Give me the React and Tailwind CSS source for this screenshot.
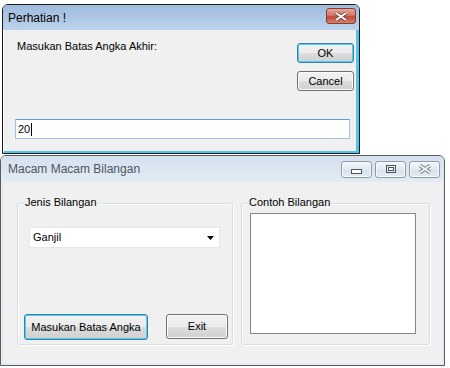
import React from 'react'

const ui = { fontFamily: '"Liberation Sans", Arial, sans-serif' }

function Button({ children, isDefault, className = '' }) {
  return (
    <div
      className={`flex items-center justify-center rounded-[3px] border text-[11px] text-black ${
        isDefault
          ? 'border-[#3c7fb1] shadow-[inset_0_0_0_1px_#48d0f5]'
          : 'border-[#707070] shadow-[inset_0_0_0_1px_#fcfcfc]'
      } bg-[linear-gradient(#f2f2f2_0%,#ebebeb_50%,#dddddd_51%,#cfcfcf_100%)] ${className}`}
    >
      {children}
    </div>
  )
}

function GroupBox({ label, className = '', children }) {
  return (
    <div
      className={`relative rounded-[3px] border border-[#d5dfe5] shadow-[inset_1px_1px_0_#ffffff,1px_1px_0_#ffffff] ${className}`}
    >
      <span className="absolute -top-[8px] left-[6px] bg-[#f0f0f0] px-[1px] text-[11px] leading-[13px] text-black">
        {label}
      </span>
      {children}
    </div>
  )
}

function CaptionButton({ children }) {
  return (
    <div className="flex h-[17px] w-[31px] items-center justify-center rounded-[3px] border border-[#8d9baa] bg-[linear-gradient(#f4f7fb,#e1e8f0_50%,#d7e0ea_51%,#e4ebf3)] shadow-[inset_0_0_0_1px_#f8fbff]">
      {children}
    </div>
  )
}

export default function App() {
  return (
    <div className="h-[368px] w-[450px] overflow-hidden bg-white" style={ui}>
      {/* Perhatian dialog */}
      <div className="ml-[2px] mt-[4px] flex h-[150px] w-[358px] flex-col overflow-hidden rounded-t-[6px] border border-[#1c1c1c]">
        <div className="flex h-[25px] items-center justify-between bg-[linear-gradient(#9fbbdc,#bcd3ec)] pl-[5px] pr-[3px]">
          <span className="text-[12px] text-black">Perhatian !</span>
          <div className="mb-[3px] flex h-[16px] w-[30px] items-center justify-center rounded-[3px] border border-[#8f3a2d] bg-[linear-gradient(#e2a89c,#d17565_45%,#c24a38_55%,#d3806e)]">
            <svg width="12" height="9" viewBox="0 0 12 9">
              <path d="M1 1 L11 8 M11 1 L1 8" stroke="#6b3a34" strokeWidth="3.4" />
              <path d="M1 1 L11 8 M11 1 L1 8" stroke="#ffffff" strokeWidth="2" />
            </svg>
          </div>
        </div>
        <div className="flex flex-1 flex-col border-b-[2px] border-l border-r-[3px] border-b-[#52c4ec] border-l-white border-r-[#52c4ec] bg-[#f0f0f0]">
          <div className="flex">
            <div className="flex-1 pl-[13px] pt-[10px] text-[11px] leading-[13px] text-black">
              Masukan Batas Angka Akhir:
            </div>
            <div className="mr-[2px] mt-[13px] flex flex-col gap-[8px]">
              <Button isDefault className="h-[20px] w-[57px]">OK</Button>
              <Button className="h-[20px] w-[57px]">Cancel</Button>
            </div>
          </div>
          <div className="ml-[11px] mt-[28px] flex h-[20px] w-[335px] items-center border border-[#9fc3e3] border-t-[#5f9ed6] bg-white pl-[2px] text-[11px] text-black">
            20
            <span className="ml-[1px] h-[13px] w-px bg-black" />
          </div>
        </div>
      </div>

      {/* Macam Macam Bilangan window */}
      <div className="mt-[1px] flex h-[211px] w-[445px] flex-col overflow-hidden rounded-t-[6px] border border-[#5b5b5b]">
        <div className="flex h-[26px] items-center justify-between bg-[linear-gradient(#d5e1ee,#e3ebf4)] pl-[7px] pr-[4px]">
          <span className="text-[12px] text-[#4c5660]">Macam Macam Bilangan</span>
          <div className="flex gap-[3px]">
            <CaptionButton>
              <svg width="11" height="5" viewBox="0 0 11 5" className="mt-[5px]">
                <rect x="0.5" y="0.5" width="10" height="4" fill="#ffffff" stroke="#4d5560" />
              </svg>
            </CaptionButton>
            <CaptionButton>
              <svg width="10" height="8" viewBox="0 0 10 8">
                <rect x="0.5" y="0.5" width="9" height="7" fill="none" stroke="#4d5560" />
                <rect x="2.5" y="2.5" width="5" height="3" fill="#ffffff" stroke="#4d5560" />
              </svg>
            </CaptionButton>
            <CaptionButton>
              <svg width="14" height="10" viewBox="0 0 14 10">
                <path d="M2 1.5 L12 8.5 M12 1.5 L2 8.5" stroke="#6d7883" strokeWidth="3.6" />
                <path d="M2 1.5 L12 8.5 M12 1.5 L2 8.5" stroke="#f4f6f8" strokeWidth="2" />
              </svg>
            </CaptionButton>
          </div>
        </div>
        <div className="flex flex-1 border-x-[2px] border-b-[2px] border-[#e3ebf4] bg-[#f0f0f0] pl-[14px] pt-[21px]">
          <GroupBox label="Jenis Bilangan" className="h-[142px] w-[216px]">
            <div className="ml-[11px] mt-[23px] flex h-[21px] w-[191px] items-center justify-between border border-[#e2e8ee] bg-white pl-[3px] pr-[5px] text-[11px] text-black">
              Ganjil
              <svg width="7" height="4" viewBox="0 0 7 4">
                <path d="M0 0 H7 L3.5 4 Z" fill="#000000" />
              </svg>
            </div>
            <div className="ml-[6px] mt-[66px] flex gap-[18px]">
              <Button isDefault className="h-[26px] w-[124px]">Masukan Batas Angka</Button>
              <Button className="h-[25px] w-[62px]">Exit</Button>
            </div>
          </GroupBox>
          <GroupBox label="Contoh Bilangan" className="ml-[8px] h-[142px] w-[189px]">
            <div className="ml-[8px] mt-[9px] h-[121px] w-[166px] border border-[#828790] bg-white" />
          </GroupBox>
        </div>
      </div>
    </div>
  )
}
